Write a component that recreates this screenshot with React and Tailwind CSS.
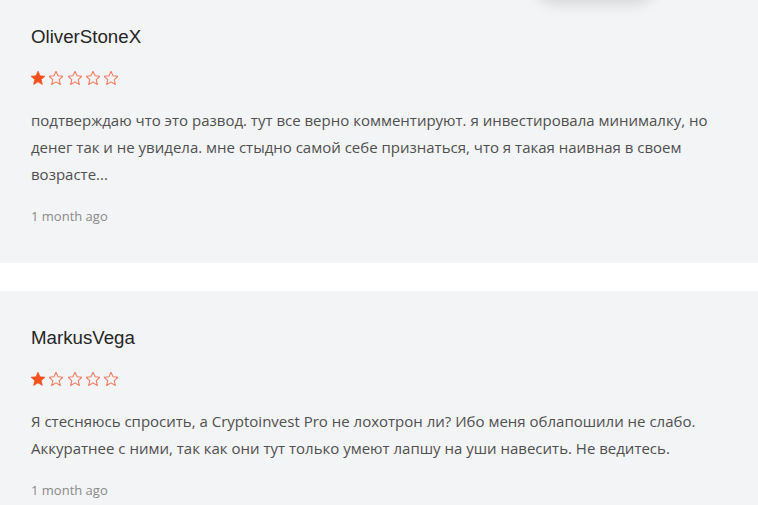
import React from 'react';

const reviews = [
  {
    name: 'OliverStoneX',
    rating: 1,
    text: 'подтверждаю что это развод. тут все верно комментируют. я инвестировала минималку, но денег так и не увидела. мне стыдно самой себе признаться, что я такая наивная в своем возрасте...',
    time: '1 month ago',
  },
  {
    name: 'MarkusVega',
    rating: 1,
    text: 'Я стесняюсь спросить, а Cryptoinvest Pro не лохотрон ли? Ибо меня облапошили не слабо. Аккуратнее с ними, так как они тут только умеют лапшу на уши навесить. Не ведитесь.',
    time: '1 month ago',
  },
];

const Star = ({ filled }) => (
  <svg width="14" height="14" viewBox="2 2.2 20 20">
    <path
      d="M12 2.5l2.9 6.6 7.1.6-5.4 4.7 1.6 7-6.2-3.7-6.2 3.7 1.6-7L2 9.7l7.1-.6z"
      fill={filled ? '#f4511e' : 'none'}
      stroke={filled ? '#f4511e' : '#f27a5e'}
      strokeWidth={filled ? 1 : 1.5}
      strokeLinejoin="round"
    />
  </svg>
);

const ReviewCard = ({ review }) => (
  <div className="bg-[#f3f4f6] px-[31px] pt-[36px] pb-[38px]">
    <div className="text-[18.7px] leading-[22px] text-[#262626] font-['Liberation_Sans',Arial,sans-serif]">
      {review.name}
    </div>
    <div className="flex gap-[4.3px] mt-[23px] h-[14px] items-center">
      {[1, 2, 3, 4, 5].map((i) => (
        <Star key={i} filled={i <= review.rating} />
      ))}
    </div>
    <p className="mt-[22px] text-[15px] leading-[27px] text-[#505050] font-['Open_Sans',sans-serif]">
      {review.text}
    </p>
    <div className="mt-[19px] text-[13px] leading-[18px] text-[#8a8a8a] font-['Open_Sans',sans-serif]">
      {review.time}
    </div>
  </div>
);

export default function App() {
  return (
    <div className="relative w-[758px] h-[505px] overflow-hidden bg-white">
      <div className="-mt-[10px] flex flex-col gap-[28px]">
        <ReviewCard review={reviews[0]} />
        <ReviewCard review={reviews[1]} />
      </div>
      {/* floating element just above the viewport, only its shadow shows */}
      <div className="absolute left-[535px] -top-[40px] w-[120px] h-[40px] rounded-full bg-[#eeeff1] shadow-[0_4px_14px_rgba(0,0,0,0.12)]" />
    </div>
  );
}
